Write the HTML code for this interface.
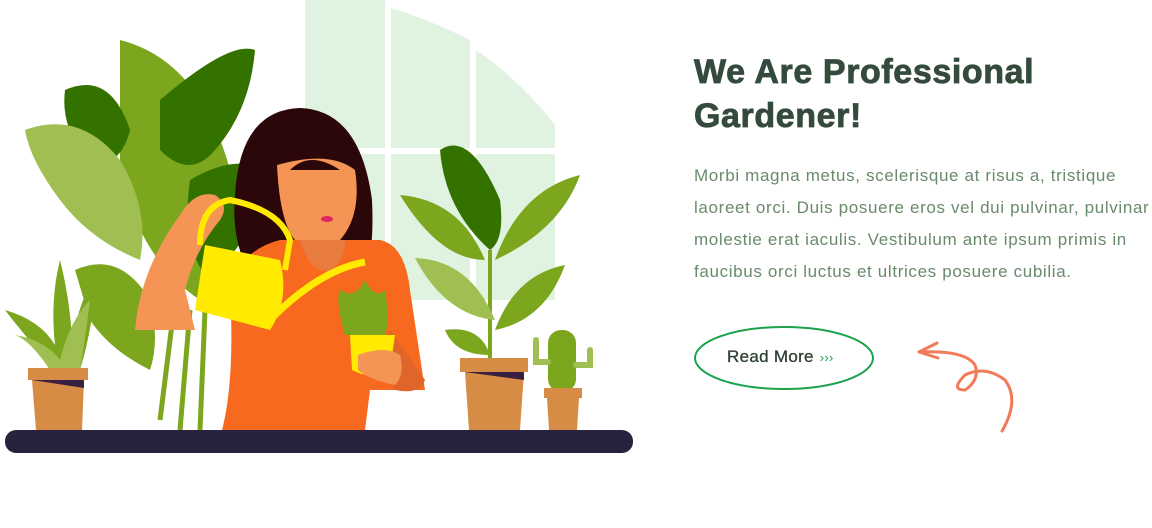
<!DOCTYPE html>
<html><head><meta charset="utf-8"><style>
html,body{margin:0;padding:0;background:#fff;width:1152px;height:528px;overflow:hidden;font-family:"Liberation Sans",sans-serif}
svg{position:absolute;left:0;top:0}
h1{position:absolute;left:694px;top:50px;margin:0;font-size:34px;line-height:44px;color:#344a3c;font-weight:bold;letter-spacing:0.6px;-webkit-text-stroke:0.8px #344a3c}
p{position:absolute;left:694px;top:160px;margin:0;white-space:nowrap;font-size:17px;letter-spacing:0.65px;line-height:32px;color:#6a8a6c}
.btn{position:absolute;left:727px;top:347px;font-size:17px;color:#2f3f33;letter-spacing:0.3px;-webkit-text-stroke:0.3px #2f3f33}
.btn span{color:#1aa34a;font-size:13px;margin-left:6px;-webkit-text-stroke:0}
</style></head><body>
<svg width="1152" height="528" viewBox="0 0 1152 528">
 <path d="M305 0 H385 V148 H305Z M391 8 Q430 20 470 40 V148 H391Z M476 50 Q520 80 555 125 V148 H476Z M305 154 H385 V300 H305Z M391 154 H470 V300 H391Z M476 154 H555 V300 H476Z" fill="#dff3e0"/>
 <path d="M120 40 Q200 60 230 170 Q250 270 200 300 Q140 260 120 170Z" fill="#7ca61d"/>
 <path d="M160 100 Q230 40 255 50 Q250 110 215 150 Q190 180 160 150Z" fill="#347200"/>
 <path d="M65 90 Q110 70 130 130 Q120 170 90 160 Q60 130 65 90Z" fill="#347200"/>
 <path d="M25 130 Q80 110 120 160 Q150 210 140 260 Q90 240 60 200 Q30 160 25 130Z" fill="#9fbf52"/>
 <path d="M190 180 Q240 150 275 175 Q250 240 210 280 Q180 250 190 180Z" fill="#347200"/>
 <path d="M75 270 Q120 250 150 300 Q160 340 150 370 Q110 350 90 320Z" fill="#7ca61d"/>
 <path d="M160 420 L175 300 M180 430 L190 310 M200 430 L205 310" stroke="#7ca61d" stroke-width="5" fill="none"/>
 <path d="M55 370 Q20 330 5 310 Q40 320 55 345 Q50 300 60 260 Q70 300 72 340 Q80 300 95 275 Q95 320 80 370Z" fill="#7ca61d"/>
 <path d="M50 370 Q30 340 15 335 Q45 340 60 360 Q70 320 90 300 Q85 340 80 370Z" fill="#9fbf52"/>
 <rect x="28" y="368" width="60" height="12" fill="#d68c45"/>
 <path d="M32 380 H84 L82 430 H36Z" fill="#d68c45"/>
 <path d="M32 380 H84 V388 Z" fill="#3a2040"/>
 <path d="M235 195 Q240 110 300 108 Q360 110 372 200 Q375 260 360 290 L260 290 Q230 250 235 195Z" fill="#2b0709"/>
 <path d="M277 165 Q330 150 355 170 Q362 215 340 240 Q320 250 300 245 Q280 230 277 165Z" fill="#f59555"/>
 <path d="M290 170 Q310 150 340 170" fill="#2b0709"/>
 <path d="M230 290 Q240 250 280 240 H380 Q405 245 410 290 L425 390 H370 L365 430 H222 Q235 380 230 290Z" fill="#f6691e"/>
 <path d="M300 240 Q310 275 330 270 Q345 262 345 240Z" fill="#e87b3e"/>
 <ellipse cx="327" cy="219" rx="6" ry="3" fill="#e0255f"/>
 <path d="M135 330 Q140 270 180 215 Q195 190 215 195 Q230 205 220 220 Q195 250 185 290 L195 330Z" fill="#f59555"/>
 <path d="M390 330 L425 380 Q420 395 395 390 L380 350Z" fill="#e0652b"/>
 <path d="M205 245 L280 260 Q290 300 270 330 L195 310Z" fill="#ffea00"/>
 <path d="M200 245 Q200 205 230 200 Q280 210 290 240 L285 270" stroke="#ffea00" stroke-width="6" fill="none"/>
 <path d="M272 318 Q320 270 365 262" stroke="#ffea00" stroke-width="7" fill="none"/>
 <path d="M345 335 Q335 300 340 290 Q355 300 365 280 Q375 300 385 290 Q390 320 385 335Z" fill="#7ca61d"/>
 <path d="M350 335 L395 335 L390 370 Q370 380 352 370Z" fill="#ffea00"/>
 <path d="M358 355 Q385 345 400 355 Q405 375 395 385 Q370 380 358 370Z" fill="#f59555"/>
 <path d="M490 360 L490 250" stroke="#7ca61d" stroke-width="4"/>
 <path d="M440 150 Q470 130 500 200 Q505 240 490 250 Q445 210 440 150Z" fill="#347200"/>
 <path d="M400 195 Q460 200 485 260 Q440 260 400 195Z" fill="#7ca61d"/>
 <path d="M580 175 Q520 190 495 260 Q560 230 580 175Z" fill="#7ca61d"/>
 <path d="M415 258 Q470 260 495 320 Q445 315 415 258Z" fill="#9fbf52"/>
 <path d="M565 265 Q515 275 495 330 Q545 320 565 265Z" fill="#7ca61d"/>
 <path d="M445 330 Q480 325 490 355 Q455 355 445 330Z" fill="#7ca61d"/>
 <rect x="460" y="358" width="68" height="14" fill="#d68c45"/>
 <path d="M465 372 H524 L520 430 H469Z" fill="#d68c45"/>
 <path d="M465 372 H524 V380 Z" fill="#3a2040"/>
 <rect x="548" y="330" width="28" height="62" rx="13" fill="#7ca61d"/>
 <path d="M548 362 H536 V340" stroke="#9fbf52" stroke-width="6" fill="none" stroke-linecap="round"/>
 <path d="M576 365 H590 V350" stroke="#9fbf52" stroke-width="6" fill="none" stroke-linecap="round"/>
 <rect x="544" y="388" width="38" height="10" fill="#d68c45"/>
 <path d="M547 398 H579 L577 430 H549Z" fill="#d68c45"/>
 <rect x="5" y="430" width="628" height="23" rx="11" fill="#29223f"/>
 <ellipse cx="784" cy="358" rx="89" ry="31" fill="none" stroke="#1aa34a" stroke-width="2"/>
 <path d="M1002 431 Q1020 400 1005 380 Q985 365 965 375 Q950 390 965 390 Q980 380 975 365 Q965 350 920 352" fill="none" stroke="#f07a5a" stroke-width="3" stroke-linecap="round"/>
 <path d="M937 343 L919 352 L938 358" fill="none" stroke="#f07a5a" stroke-width="3" stroke-linecap="round" stroke-linejoin="round"/>
</svg>
<h1>We Are Professional<br>Gardener!</h1>
<p>Morbi magna metus, scelerisque at risus a, tristique<br>laoreet orci. Duis posuere eros vel dui pulvinar, pulvinar<br>molestie erat iaculis. Vestibulum ante ipsum primis in<br>faucibus orci luctus et ultrices posuere cubilia.</p>
<div class="btn">Read More<span>›››</span></div>
</body></html>
